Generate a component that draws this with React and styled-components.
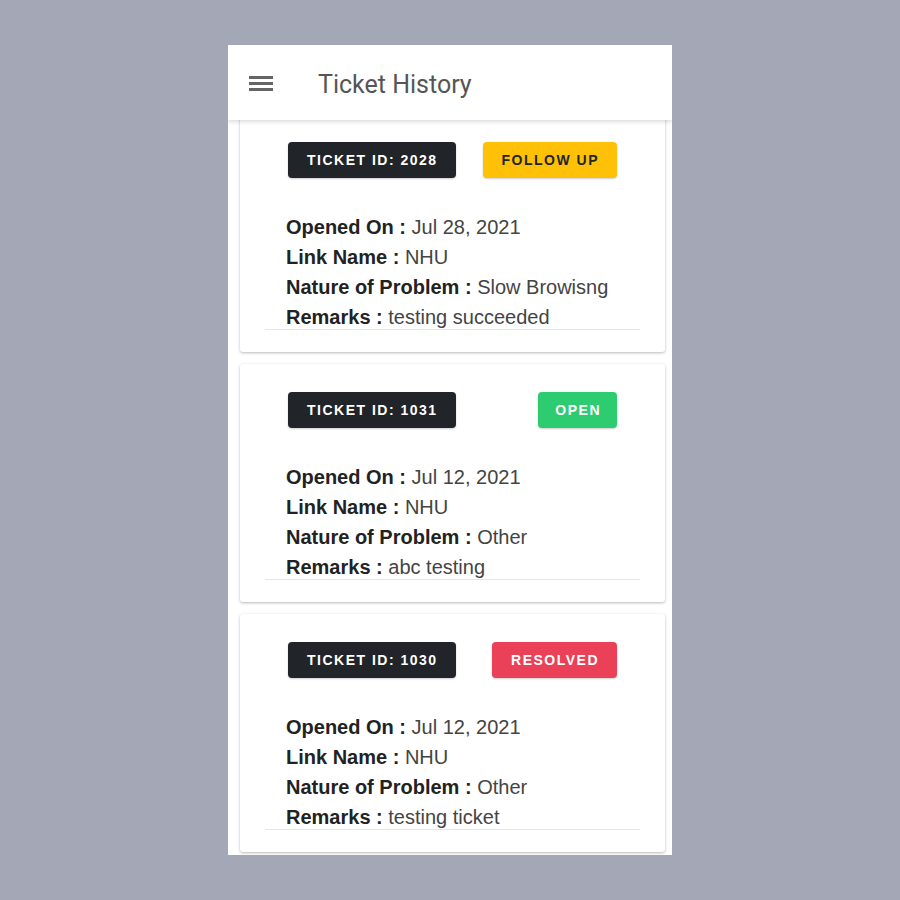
import React, { useEffect, useRef } from 'react';
import styled, { createGlobalStyle } from 'styled-components';

const GlobalStyle = createGlobalStyle`
    body{
        margin: 0;
        background-color: #a3a7b6;
        font-family: "Liberation Sans", Arial, sans-serif;
    }
`;

const Phone = styled.div`
    width: 444px;
    height: 810px;
    margin: 45px auto 0;
    background-color: #fff;
    display: flex;
    flex-direction: column;
    overflow: hidden;
`;

const Header = styled.header`
    height: 75px;
    flex-shrink: 0;
    display: flex;
    align-items: center;
    padding-left: 21px;
    background-color: #fff;
    box-shadow: 0 2px 4px rgba(0, 0, 0, 0.14);
    position: relative;
    z-index: 1;
    h1{
        margin: 3px 0 0 45px;
        font-family: Roboto, "Noto Sans", sans-serif;
        font-size: 25px;
        font-weight: 400;
        color: #555;
    }
`;

const Burger = styled.span`
    display: flex;
    flex-direction: column;
    gap: 3px;
    width: 24px;
    margin-top: 2px;
    span{
        height: 3px;
        background-color: #666;
    }
`;

const List = styled.div`
    flex: 1;
    overflow-y: scroll;
    padding: 0 7px 12px 12px;
    display: flex;
    flex-direction: column;
    gap: 12px;
    scrollbar-width: none;
    &::-webkit-scrollbar{
        display: none;
    }
`;

const Card = styled.div`
    flex-shrink: 0;
    height: 238px;
    box-sizing: border-box;
    padding: 28px 25px 0;
    background-color: #fff;
    border-radius: 3px;
    box-shadow: 0 1px 3px rgba(0, 0, 0, 0.28);
`;

const BadgeRow = styled.div`
    display: flex;
    justify-content: space-between;
    padding: 0 23px;
`;

const colors = {
    id: ['#212529', '#fff'],
    followup: ['#ffc107', '#212529'],
    open: ['#2ecc71', '#fff'],
    resolved: ['#ea4159', '#fff']
};

const Badge = styled.span`
    height: 36px;
    display: flex;
    align-items: center;
    padding: 0 ${({ tight }) => (tight ? 16 : 18)}px 0 ${({ tight }) => (tight ? 17 : 19)}px;
    border-radius: 4px;
    font-size: 14px;
    font-weight: 700;
    letter-spacing: 1.5px;
    text-transform: uppercase;
    background-color: ${({ kind }) => colors[kind][0]};
    color: ${({ kind }) => colors[kind][1]};
    box-shadow: 0 1px 2px rgba(0, 0, 0, 0.2);
`;

const Details = styled.div`
    margin-top: 34px;
    padding-left: 21px;
    p{
        margin: 0;
        font-size: 20px;
        line-height: 30px;
        color: #444;
        b{
            color: #222;
        }
    }
`;

const Rule = styled.div`
    border-top: 1px solid #e6e6e6;
    margin-top: -3px;
`;

const tickets = [
    { id: 2028, status: 'followup', label: 'Follow up', opened: 'Jul 28, 2021', link: 'NHU', problem: 'Slow Browisng', remarks: 'testing succeeded' },
    { id: 1031, status: 'open', label: 'Open', opened: 'Jul 12, 2021', link: 'NHU', problem: 'Other', remarks: 'abc testing' },
    { id: 1030, status: 'resolved', label: 'Resolved', opened: 'Jul 12, 2021', link: 'NHU', problem: 'Other', remarks: 'testing ticket' }
];

const App = () => {
    const listRef = useRef(null);

    useEffect(() => {
        // the list is shown a few pixels scrolled
        if (listRef.current) listRef.current.scrollTop = 6;
    }, []);

    return (
        <>
            <GlobalStyle />
            <Phone>
                <Header>
                    <Burger><span /><span /><span /></Burger>
                    <h1>Ticket History</h1>
                </Header>
                <List ref={listRef}>
                    {tickets.map(t => (
                        <Card key={t.id}>
                            <BadgeRow>
                                <Badge kind='id'>Ticket ID: {t.id}</Badge>
                                <Badge kind={t.status} tight={t.status === 'open'}>{t.label}</Badge>
                            </BadgeRow>
                            <Details>
                                <p><b>Opened On :</b> {t.opened}</p>
                                <p><b>Link Name :</b> {t.link}</p>
                                <p><b>Nature of Problem :</b> {t.problem}</p>
                                <p><b>Remarks :</b> {t.remarks}</p>
                            </Details>
                            <Rule />
                        </Card>
                    ))}
                </List>
            </Phone>
        </>
    );
};

export default App;
